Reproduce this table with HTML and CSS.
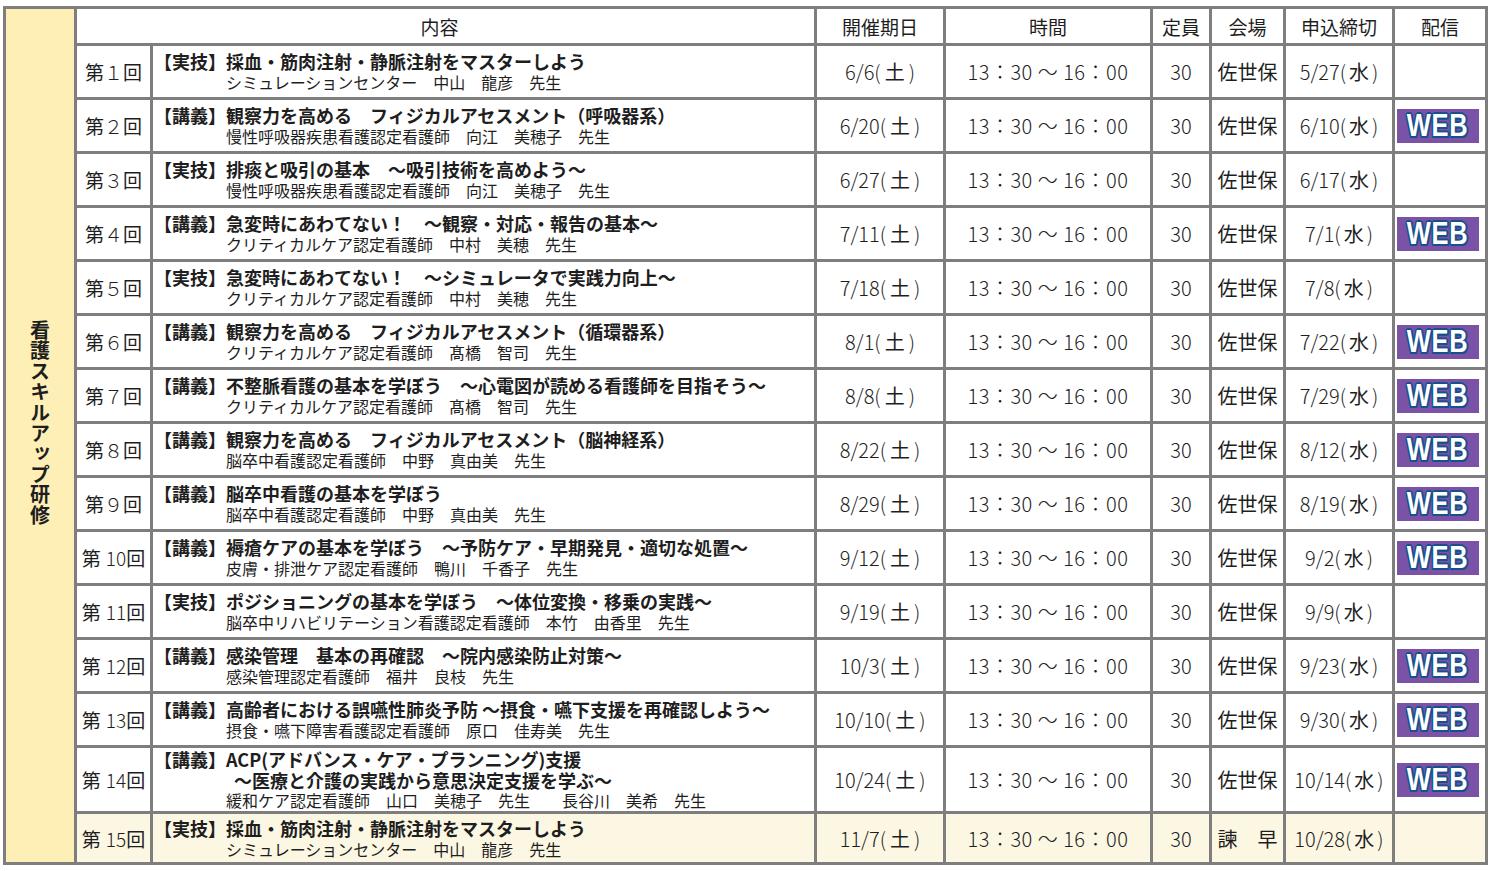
FILE: index.html
```html
<!DOCTYPE html>
<html lang="ja">
<head>
<meta charset="utf-8">
<title>看護スキルアップ研修</title>
<link rel="stylesheet" href="styles.css">
</head>
<body>
<div class="sheet">
  <div class="cat"><span class="cat-text">看護スキルアップ研修</span></div>

  <div class="hd hd-content">内容</div>
  <div class="hd">開催期日</div>
  <div class="hd">時間</div>
  <div class="hd">定員</div>
  <div class="hd">会場</div>
  <div class="hd">申込締切</div>
  <div class="hd">配信</div>

  <div class="num">第<span class="n1">１</span>回</div>
  <div class="content"><div class="ttl">【実技】採血・筋肉注射・静脈注射をマスターしよう</div><div class="sub">シミュレーションセンター　中山　龍彦　先生</div></div>
  <div class="date">6/6(<span class="k">土</span>)</div>
  <div class="time">13：30 ～ 16：00</div>
  <div class="cap">30</div>
  <div class="venue">佐世保</div>
  <div class="dl">5/27(<span class="k">水</span>)</div>
  <div class="web"></div>

  <div class="num">第<span class="n1">２</span>回</div>
  <div class="content"><div class="ttl">【講義】観察力を高める　フィジカルアセスメント（呼吸器系）</div><div class="sub">慢性呼吸器疾患看護認定看護師　向江　美穂子　先生</div></div>
  <div class="date">6/20(<span class="k">土</span>)</div>
  <div class="time">13：30 ～ 16：00</div>
  <div class="cap">30</div>
  <div class="venue">佐世保</div>
  <div class="dl">6/10(<span class="k">水</span>)</div>
  <div class="web"><span class="badge"><span class="badge-t">WEB</span></span></div>

  <div class="num">第<span class="n1">３</span>回</div>
  <div class="content"><div class="ttl">【実技】排痰と吸引の基本　～吸引技術を高めよう～</div><div class="sub">慢性呼吸器疾患看護認定看護師　向江　美穂子　先生</div></div>
  <div class="date">6/27(<span class="k">土</span>)</div>
  <div class="time">13：30 ～ 16：00</div>
  <div class="cap">30</div>
  <div class="venue">佐世保</div>
  <div class="dl">6/17(<span class="k">水</span>)</div>
  <div class="web"></div>

  <div class="num">第<span class="n1">４</span>回</div>
  <div class="content"><div class="ttl">【講義】急変時にあわてない！　～観察・対応・報告の基本～</div><div class="sub">クリティカルケア認定看護師　中村　美穂　先生</div></div>
  <div class="date">7/11(<span class="k">土</span>)</div>
  <div class="time">13：30 ～ 16：00</div>
  <div class="cap">30</div>
  <div class="venue">佐世保</div>
  <div class="dl">7/1(<span class="k">水</span>)</div>
  <div class="web"><span class="badge"><span class="badge-t">WEB</span></span></div>

  <div class="num">第<span class="n1">５</span>回</div>
  <div class="content"><div class="ttl">【実技】急変時にあわてない！　～シミュレータで実践力向上～</div><div class="sub">クリティカルケア認定看護師　中村　美穂　先生</div></div>
  <div class="date">7/18(<span class="k">土</span>)</div>
  <div class="time">13：30 ～ 16：00</div>
  <div class="cap">30</div>
  <div class="venue">佐世保</div>
  <div class="dl">7/8(<span class="k">水</span>)</div>
  <div class="web"></div>

  <div class="num">第<span class="n1">６</span>回</div>
  <div class="content"><div class="ttl">【講義】観察力を高める　フィジカルアセスメント（循環器系）</div><div class="sub">クリティカルケア認定看護師　髙橋　智司　先生</div></div>
  <div class="date">8/1(<span class="k">土</span>)</div>
  <div class="time">13：30 ～ 16：00</div>
  <div class="cap">30</div>
  <div class="venue">佐世保</div>
  <div class="dl">7/22(<span class="k">水</span>)</div>
  <div class="web"><span class="badge"><span class="badge-t">WEB</span></span></div>

  <div class="num">第<span class="n1">７</span>回</div>
  <div class="content"><div class="ttl">【講義】不整脈看護の基本を学ぼう　～心電図が読める看護師を目指そう～</div><div class="sub">クリティカルケア認定看護師　髙橋　智司　先生</div></div>
  <div class="date">8/8(<span class="k">土</span>)</div>
  <div class="time">13：30 ～ 16：00</div>
  <div class="cap">30</div>
  <div class="venue">佐世保</div>
  <div class="dl">7/29(<span class="k">水</span>)</div>
  <div class="web"><span class="badge"><span class="badge-t">WEB</span></span></div>

  <div class="num">第<span class="n1">８</span>回</div>
  <div class="content"><div class="ttl">【講義】観察力を高める　フィジカルアセスメント（脳神経系）</div><div class="sub">脳卒中看護認定看護師　中野　真由美　先生</div></div>
  <div class="date">8/22(<span class="k">土</span>)</div>
  <div class="time">13：30 ～ 16：00</div>
  <div class="cap">30</div>
  <div class="venue">佐世保</div>
  <div class="dl">8/12(<span class="k">水</span>)</div>
  <div class="web"><span class="badge"><span class="badge-t">WEB</span></span></div>

  <div class="num">第<span class="n1">９</span>回</div>
  <div class="content"><div class="ttl">【講義】脳卒中看護の基本を学ぼう</div><div class="sub">脳卒中看護認定看護師　中野　真由美　先生</div></div>
  <div class="date">8/29(<span class="k">土</span>)</div>
  <div class="time">13：30 ～ 16：00</div>
  <div class="cap">30</div>
  <div class="venue">佐世保</div>
  <div class="dl">8/19(<span class="k">水</span>)</div>
  <div class="web"><span class="badge"><span class="badge-t">WEB</span></span></div>

  <div class="num">第<span class="n2">10</span>回</div>
  <div class="content"><div class="ttl">【講義】褥瘡ケアの基本を学ぼう　～予防ケア・早期発見・適切な処置～</div><div class="sub">皮膚・排泄ケア認定看護師　鴨川　千香子　先生</div></div>
  <div class="date">9/12(<span class="k">土</span>)</div>
  <div class="time">13：30 ～ 16：00</div>
  <div class="cap">30</div>
  <div class="venue">佐世保</div>
  <div class="dl">9/2(<span class="k">水</span>)</div>
  <div class="web"><span class="badge"><span class="badge-t">WEB</span></span></div>

  <div class="num">第<span class="n2">11</span>回</div>
  <div class="content"><div class="ttl">【実技】ポジショニングの基本を学ぼう　～体位変換・移乗の実践～</div><div class="sub">脳卒中リハビリテーション看護認定看護師　本竹　由香里　先生</div></div>
  <div class="date">9/19(<span class="k">土</span>)</div>
  <div class="time">13：30 ～ 16：00</div>
  <div class="cap">30</div>
  <div class="venue">佐世保</div>
  <div class="dl">9/9(<span class="k">水</span>)</div>
  <div class="web"></div>

  <div class="num">第<span class="n2">12</span>回</div>
  <div class="content"><div class="ttl">【講義】感染管理　基本の再確認　～院内感染防止対策～</div><div class="sub">感染管理認定看護師　福井　良枝　先生</div></div>
  <div class="date">10/3(<span class="k">土</span>)</div>
  <div class="time">13：30 ～ 16：00</div>
  <div class="cap">30</div>
  <div class="venue">佐世保</div>
  <div class="dl">9/23(<span class="k">水</span>)</div>
  <div class="web"><span class="badge"><span class="badge-t">WEB</span></span></div>

  <div class="num">第<span class="n2">13</span>回</div>
  <div class="content"><div class="ttl">【講義】高齢者における誤嚥性肺炎予防 ～摂食・嚥下支援を再確認しよう～</div><div class="sub">摂食・嚥下障害看護認定看護師　原口　佳寿美　先生</div></div>
  <div class="date">10/10(<span class="k">土</span>)</div>
  <div class="time">13：30 ～ 16：00</div>
  <div class="cap">30</div>
  <div class="venue">佐世保</div>
  <div class="dl">9/30(<span class="k">水</span>)</div>
  <div class="web"><span class="badge"><span class="badge-t">WEB</span></span></div>

  <div class="num">第<span class="n2">14</span>回</div>
  <div class="content"><div class="ttl">【講義】ACP(アドバンス・ケア・プランニング)支援</div><div class="ttl ttl2">～医療と介護の実践から意思決定支援を学ぶ～</div><div class="sub">緩和ケア認定看護師　山口　美穂子　先生　　長谷川　美希　先生</div></div>
  <div class="date">10/24(<span class="k">土</span>)</div>
  <div class="time">13：30 ～ 16：00</div>
  <div class="cap">30</div>
  <div class="venue">佐世保</div>
  <div class="dl">10/14(<span class="k">水</span>)</div>
  <div class="web"><span class="badge"><span class="badge-t">WEB</span></span></div>

  <div class="num cream">第<span class="n2">15</span>回</div>
  <div class="content cream"><div class="ttl">【実技】採血・筋肉注射・静脈注射をマスターしよう</div><div class="sub">シミュレーションセンター　中山　龍彦　先生</div></div>
  <div class="date cream">11/7(<span class="k">土</span>)</div>
  <div class="time cream">13：30 ～ 16：00</div>
  <div class="cap cream">30</div>
  <div class="venue cream">諫　早</div>
  <div class="dl cream">10/28(<span class="k">水</span>)</div>
  <div class="web cream"></div>
</div>
</body>
</html>
```

FILE: styles.css
```css
html, body {
  margin: 0;
  padding: 0;
  background: #ffffff;
}

body {
  font-family: "Noto Sans CJK JP", "Noto Sans", sans-serif;
  color: #1e1e1e;
}

.sheet {
  margin: 6px 0 0 3px;
  width: 1485px;
  box-sizing: border-box;
  display: grid;
  grid-template-columns: 68px 73px 661px 126px 204px 56px 71px 106px 90px;
  grid-template-rows: 34px repeat(13, 51px) 63px 48px;
  gap: 3px;
  padding: 3px;
  background: #7e7e7e;
}

.sheet > div {
  background: #ffffff;
  display: flex;
  align-items: center;
  justify-content: center;
  white-space: nowrap;
}

.sheet > .cream {
  background: #fcf7e3;
}

.cat {
  grid-row: 1 / -1;
  grid-column: 1;
}

.sheet > .cat {
  background: #fdefb6;
  padding-bottom: 26px;
  box-sizing: border-box;
}

.cat-text {
  writing-mode: vertical-rl;
  font-size: 20px;
  font-weight: 700;
  letter-spacing: 0.6px;
  color: #1e1e1e;
}

.hd {
  font-size: 19px;
  font-weight: 400;
}

.hd-content {
  grid-column: 2 / span 2;
  padding-right: 12px;
}

.num {
  font-size: 19px;
}

.n1 {
  font-weight: 300;
}

.n2 {
  font-weight: 300;
  margin-left: 5px;
}

.sheet > .content {
  flex-direction: column;
  align-items: flex-start;
  justify-content: center;
  padding-left: 1px;
}

.ttl {
  font-size: 18px;
  font-weight: 700;
  line-height: 21px;
}

.ttl2 {
  padding-left: 80px;
  line-height: 20px;
}

.sub {
  font-size: 16px;
  font-weight: 400;
  line-height: 20px;
  padding-left: 72px;
}

.date, .dl, .time, .cap {
  font-size: 20px;
  font-weight: 300;
}

.k {
  font-weight: 400;
  margin: 0 4px;
}

.dl .k {
  margin: 0 3px;
}

.time {
  letter-spacing: 0.5px;
}

.venue {
  font-size: 20px;
  font-weight: 400;
}

.badge {
  display: flex;
  align-items: center;
  justify-content: center;
  width: 82px;
  height: 34px;
  margin-right: 4px;
  background: #7a52a6;
}

.badge-t {
  display: block;
  color: #ffffff;
  font-family: "Liberation Sans", Arial, sans-serif;
  font-weight: 700;
  font-size: 31px;
  line-height: 30px;
  letter-spacing: 1px;
  transform: scaleX(0.82);
  text-shadow:
    2px 0 0 #17508c, -2px 0 0 #17508c, 0 2px 0 #17508c, 0 -2px 0 #17508c,
    1.5px 1.5px 0 #17508c, -1.5px 1.5px 0 #17508c, 1.5px -1.5px 0 #17508c, -1.5px -1.5px 0 #17508c;
}
```
